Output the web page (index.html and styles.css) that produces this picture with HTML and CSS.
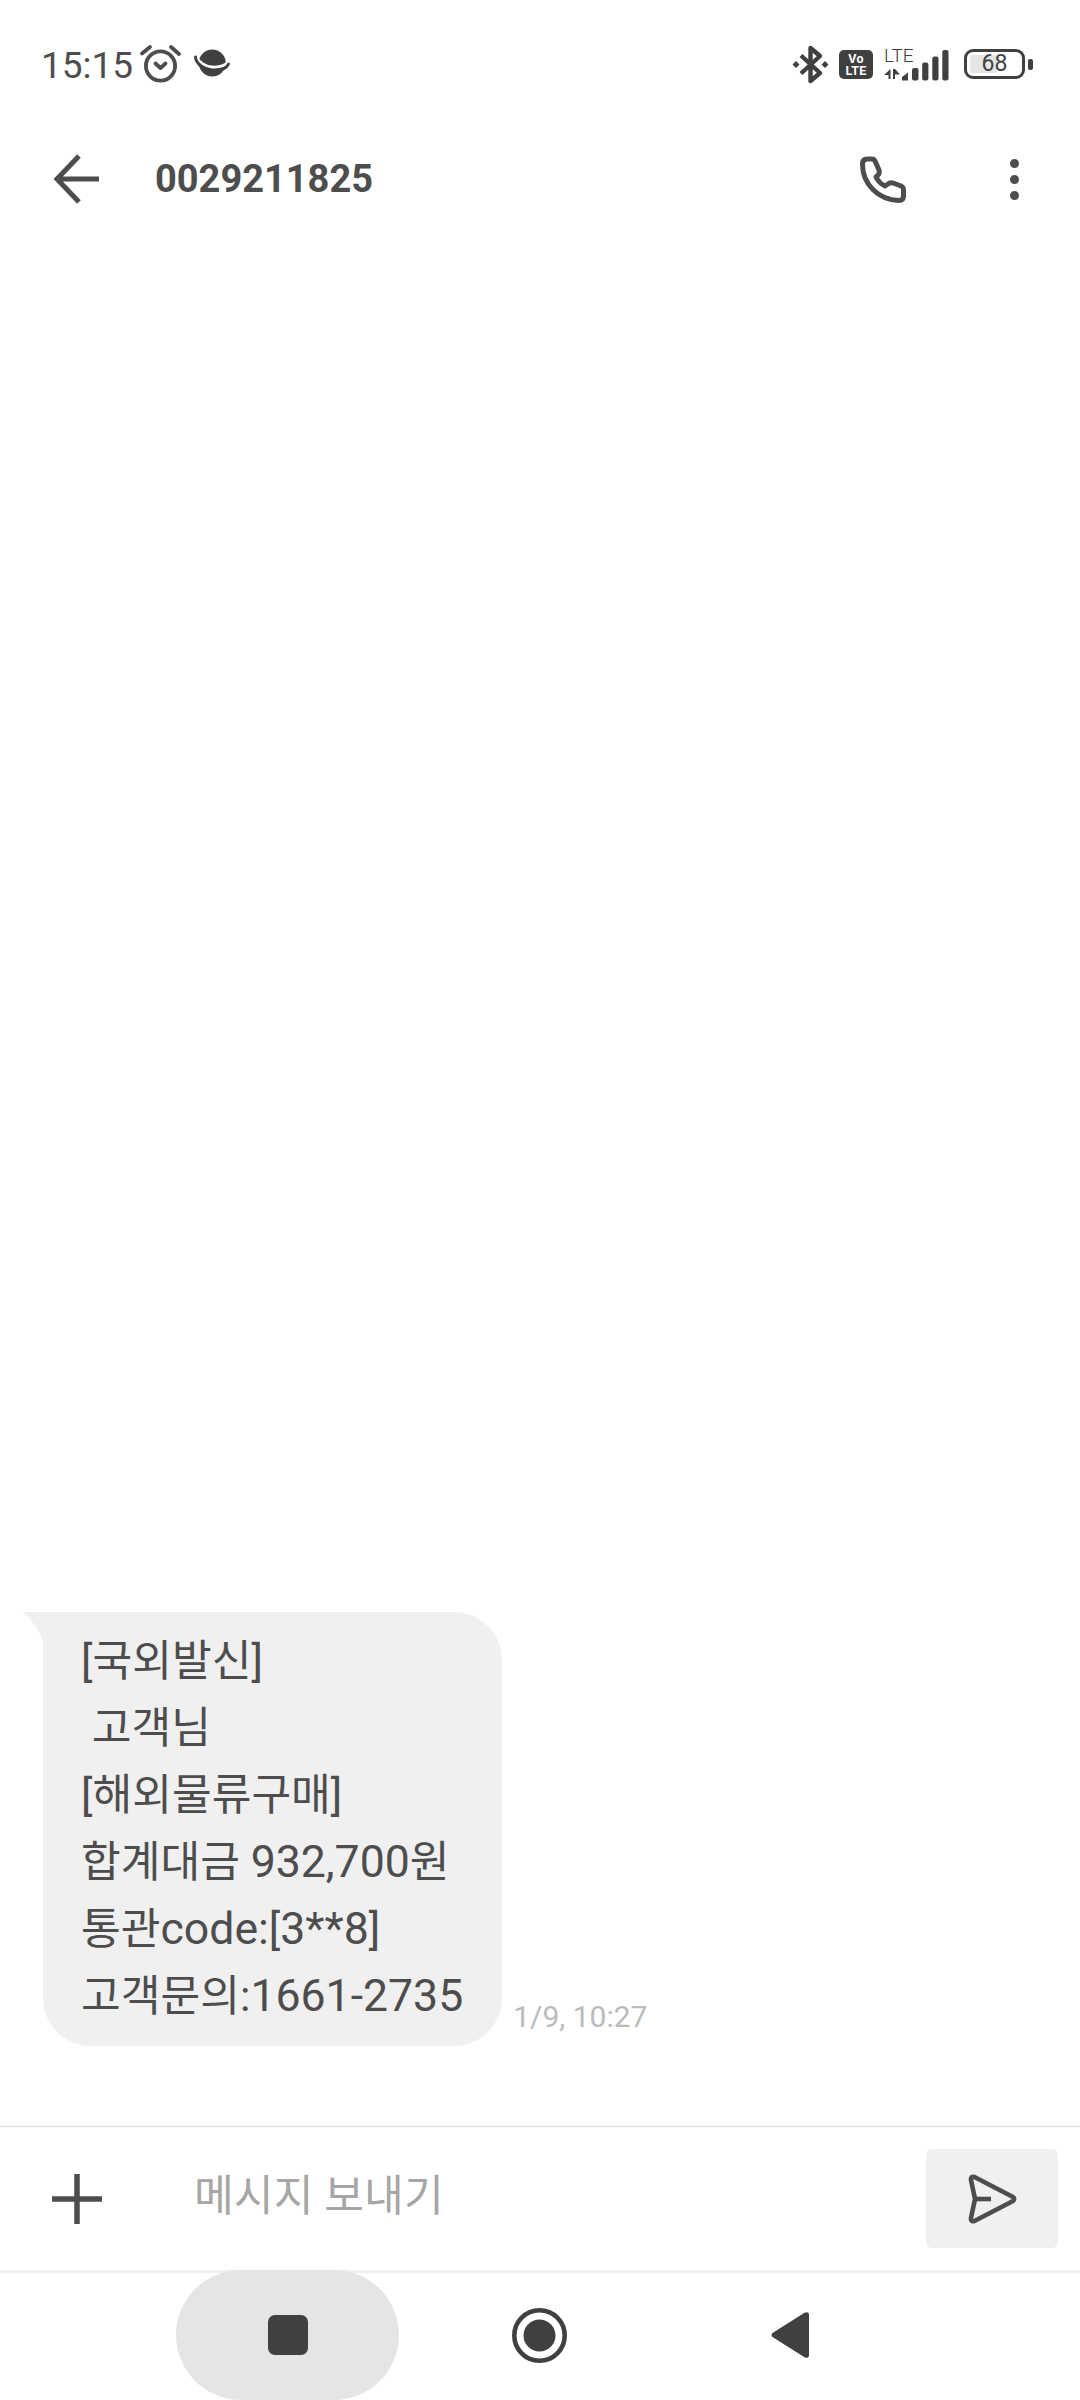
FILE: index.html
```html
<!DOCTYPE html>
<html lang="ko">
<head>
<meta charset="utf-8">
<title>0029211825</title>
<link rel="stylesheet" href="styles.css">
</head>
<body>
<div class="screen">
  <div class="status">
    <span class="time">15:15</span>
    <svg class="ic-alarm" width="40" height="37" viewBox="0 0 40 37" fill="none" stroke="#4d4d4d" stroke-width="3.8" stroke-linecap="round" stroke-linejoin="round">
      <circle cx="20.5" cy="21" r="14.6"/>
      <path d="M2 8.500L10 2M31 2L39 9"/>
      <path d="M15.500 18.500L20.500 23L25.500 18.500"/>
    </svg>
    <svg class="ic-planet" width="36" height="28" viewBox="0 0 36 28" fill="none">
      <circle cx="18.300" cy="13" r="13.500" fill="#404040"/>
      <path d="M1 6C6 13 12 16.500 18 17C24 17.500 31 16 36 11" stroke="#fff" stroke-width="2.800"/>
      <path d="M1.500 7C2 14 10 19.500 17 20.500C24 21 32 19.500 34.500 14" stroke="#404040" stroke-width="3" stroke-linecap="round"/>
    </svg>
    <div class="status-right">
      <svg width="35" height="39" viewBox="0 0 35 39" fill="none" stroke="#404040" stroke-width="4.400" stroke-linejoin="round">
        <path d="M8 10.500L27 28L17.500 36V3L27 11L8 28.500"/>
        <path d="M3 16L6.500 19.500L3 23L-.5 19.500ZM32 16L35.500 19.500L32 23L28.500 19.500Z" fill="#404040" stroke="none"/>
      </svg>
      <svg width="34" height="29" viewBox="0 0 34 29">
        <rect width="34" height="29" rx="5" fill="#404040"/>
        <text class="volte" x="17" y="13" text-anchor="middle">Vo</text>
        <text class="volte" x="17" y="25" text-anchor="middle">LTE</text>
      </svg>
      <svg width="65" height="33" viewBox="0 0 65 33" fill="#404040">
        <text class="lte" x="0" y="14">LTE</text>
        <path d="M0 27L6.500 21V31H4.500V27Z"/>
        <path d="M9 21H11L16 26.500H11V31H9Z"/>
        <path d="M18 32.500V29L24 24.500V32.500Z"/>
        <rect x="28" y="20" width="6.500" height="12.500" rx="2"/>
        <rect x="38.200" y="14.500" width="6.200" height="18" rx="2"/>
        <rect x="48.300" y="8.500" width="6.200" height="24" rx="2"/>
        <rect x="58.300" y="2" width="6.200" height="30.500" rx="2"/>
      </svg>
      <div class="battery">
        <div class="battery-body">
          <div class="battery-fill"></div>
          <span class="battery-num">68</span>
        </div>
        <div class="battery-nub"></div>
      </div>
    </div>
  </div>

  <div class="header">
    <svg class="ic-back" width="46" height="50" viewBox="0 0 46 50" fill="none" stroke="#4d4d4d" stroke-width="5">
      <path d="M45 25H3M25 2L3 25L25 48"/>
    </svg>
    <h1 class="title">0029211825</h1>
    <svg class="ic-call" width="46" height="47" viewBox="0 0 46 47" fill="none" stroke="#4d4d4d" stroke-width="5" stroke-linejoin="round">
      <path d="M7 3H12Q14 3 15 5L19 14Q20 17 18 19L16 21Q19 27 25 30L28 28Q30 26 33 27L41 30Q43.500 31 43.500 34V40Q43.500 44.500 39 44.500C18 44 2.500 28 2.500 8Q2.500 3 7 3Z"/>
    </svg>
    <svg class="ic-more" width="9" height="41" viewBox="0 0 9 41" fill="#4d4d4d">
      <circle cx="4.500" cy="4.500" r="4.500"/>
      <circle cx="4.500" cy="20.500" r="4.500"/>
      <circle cx="4.500" cy="36.500" r="4.500"/>
    </svg>
  </div>

  <div class="thread">
    <div class="msg-row">
      <div class="bubble">
        <svg class="tail" width="24" height="48" viewBox="0 0 24 48"><path d="M0 0H24V48C23 26 15 12 0 0Z" fill="#f0f0f0"/></svg>
        <div class="line">[국외발신]</div>
        <div class="line"> 고객님</div>
        <div class="line">[해외물류구매]</div>
        <div class="line">합계대금 <span class="latin">932,700</span>원</div>
        <div class="line">통관<span class="latin">code:</span>[<span class="latin">3**8</span>]</div>
        <div class="line">고객문의:<span class="latin">1661-2735</span></div>
      </div>
      <span class="stamp">1/9, 10:27</span>
    </div>
  </div>

  <div class="composer">
    <svg class="ic-plus" width="50" height="50" viewBox="0 0 50 50" stroke="#4d4d4d" stroke-width="5.500">
      <path d="M0 25H50M25 0V50"/>
    </svg>
    <span class="placeholder">메시지 보내기</span>
    <div class="send">
      <svg width="48" height="50" viewBox="0 0 48 50" fill="none" stroke="#4d4d4d" stroke-width="4.600" stroke-linejoin="round">
        <path d="M6.500 3L45 23Q47 25 45 27L6.500 47Q2.500 48 3 44L7 25L3 6Q2.500 2 6.500 3Z"/>
        <path d="M7 25H23"/>
      </svg>
    </div>
  </div>

  <div class="nav">
    <div class="pill"><div class="nav-square"></div></div>
    <svg class="nav-home" width="55" height="55" viewBox="0 0 55 55">
      <circle cx="27.500" cy="27.500" r="25.200" fill="none" stroke="#404040" stroke-width="4.600"/>
      <circle cx="27.500" cy="27.500" r="16" fill="#404040"/>
    </svg>
    <svg class="nav-back" width="38" height="46" viewBox="0 0 38 46" fill="#404040">
      <path d="M33.500 .7Q38 -1 38 3V43Q38 47 33.500 45.300L1.500 25Q-.5 23 1.500 21Z"/>
    </svg>
  </div>
</div>
</body>
</html>
```
FILE: styles.css
```css
* { box-sizing: border-box; }
html, body { margin: 0; padding: 0; background: #fff; }
body { font-family: Roboto, "Noto Sans CJK KR", sans-serif; color: #4d4d4d; }
svg { display: block; flex: none; overflow: visible; }
.screen { width: 1080px; height: 2400px; display: flex; flex-direction: column; overflow: hidden; }

.status { height: 132px; flex: none; display: flex; align-items: center; padding: 0 47px 0 41px; }
.time { font-size: 37px; line-height: 42px; }
.ic-alarm { margin: -5px 0 0 7px; }
.ic-planet { margin: -5px 0 0 14px; }
.status-right { margin-left: auto; display: flex; align-items: center; gap: 11px; margin-top: -4px; }
.volte { font: 700 12.500px Roboto, sans-serif; fill: #fff; letter-spacing: .3px; }
.lte { font: 300 19px Roboto, sans-serif; fill: #404040; }
.battery { display: flex; align-items: center; gap: 3px; margin-left: 4px; }
.battery-body { position: relative; width: 61px; height: 30px; border: 3.500px solid #404040; border-radius: 9px; display: flex; align-items: center; justify-content: center; }
.battery-fill { position: absolute; left: 3px; top: 3px; bottom: 3px; width: 27px; background: #e5e5e5; border-radius: 3px; }
.battery-num { position: relative; font-size: 23px; line-height: 22px; color: #404040; }
.battery-nub { width: 5px; height: 11px; background: #404040; border-radius: 2px; }

.header { height: 94px; flex: none; display: flex; align-items: center; padding: 0 61px 0 54px; }
.title { margin: 0 0 0 55px; font-size: 38px; font-weight: 700; line-height: 44px; color: #4d4d4d; }
.ic-call { margin-left: auto; }
.ic-more { margin-left: 104px; }

.thread { flex: 1; display: flex; flex-direction: column; justify-content: flex-end; padding: 0 0 80px 43px; }
.msg-row { display: flex; align-items: flex-end; gap: 11px; }
.bubble { position: relative; background: #f0f0f0; border-radius: 0 48px 48px 48px; padding: 16px 39px 16px 38px; }
.tail { position: absolute; left: -21px; top: 0; }
.line { font-size: 43.200px; line-height: 67px; white-space: pre; }
.latin { font-size: 44.600px; line-height: 1; }
.stamp { font-size: 30px; line-height: 34px; color: #bbb; margin-bottom: 12px; }

.composer { height: 144px; flex: none; border-top: 1px solid #d4d4d4; display: flex; align-items: center; padding: 0 22px 0 52px; }
.placeholder { font-size: 43.300px; line-height: 50px; color: #a6a6a6; margin: -4px 0 0 92px; }
.send { margin-left: auto; width: 132px; height: 99px; background: #f0f0f0; border-radius: 6px; display: flex; align-items: center; justify-content: center; }

.nav { height: 130px; flex: none; position: relative; display: flex; align-items: center; padding-left: 176px; border-top: 3px solid #f0f0f0; }
.pill { width: 223px; height: 130px; margin-top: -3px; background: #e5e5e5; border-radius: 65px; display: flex; align-items: center; justify-content: center; }
.nav-square { width: 40px; height: 40px; background: #404040; border-radius: 7px; }
.nav-home { margin: -3px 0 0 113px; }
.nav-back { margin: -3px 0 0 204px; }
```
